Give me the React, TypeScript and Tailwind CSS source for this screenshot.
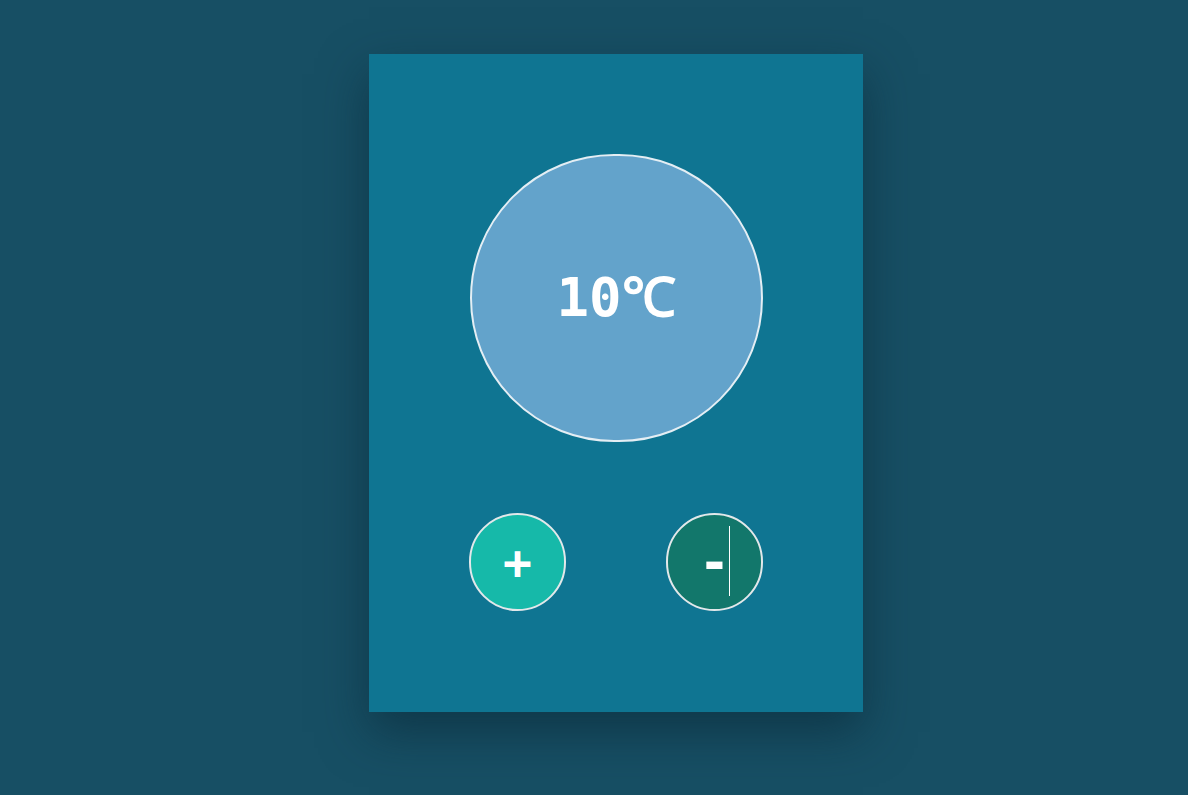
import React from "react";

export default function App() {
  return (
    <div className="w-full min-h-[795px] bg-[#174f64] flex justify-center pt-[54px] pl-[44px]" style={{ fontFamily: '"DejaVu Sans Mono", monospace' }}>
      <div className="w-[494px] h-[658px] bg-[#0f7592] flex flex-col items-center pt-[100px] shadow-[0_20px_45px_rgba(10,40,55,0.6)]">
        <div className="w-[293px] h-[288px] rounded-full bg-[#63a3cb] border-2 border-[#e4eef4] flex items-center justify-center">
          <span className="text-white font-bold text-[54px] leading-none">10℃</span>
        </div>
        <div className="mt-[71px] flex gap-[100px]">
          <div className="w-[97px] h-[98px] rounded-full bg-[#16b9a9] border-2 border-[#e2e8ea] flex items-center justify-center">
            <span className="text-white font-bold text-[48px] leading-none">+</span>
          </div>
          <div className="w-[97px] h-[98px] rounded-full bg-[#12776b] border-2 border-[#e2e8ea] flex items-center justify-center">
            <span className="text-white font-bold text-[52px] leading-none relative">
              -
              <span className="absolute left-[30px] top-[-10px] w-px h-[70px] bg-white" />
            </span>
          </div>
        </div>
      </div>
    </div>
  );
}
